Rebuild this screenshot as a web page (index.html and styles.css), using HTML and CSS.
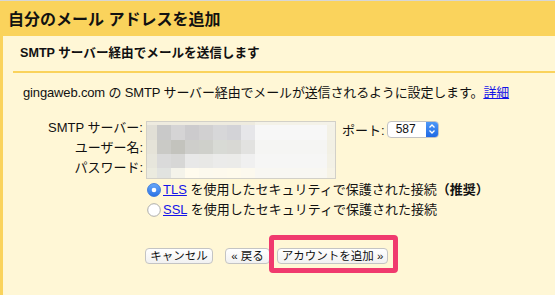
FILE: index.html
```html
<html>

<head>
  <title>自分のメール アドレスを追加</title>
  <link rel="stylesheet" href="styles.css">
</head>

<body>
  <div class="topline"></div>
  <div class="header">
    <h1 class="title">自分のメール アドレスを追加</h1>
  </div>
  <div class="panel">
    <h2 class="subhead">SMTP サーバー経由でメールを送信します</h2>
    <div class="rule"></div>
    <p class="intro">gingaweb.com の SMTP サーバー経由でメールが送信されるように設定します。<a href="#" class="link">詳細</a></p>

    <div class="form">
      <div class="label">SMTP サーバー:</div>
      <div class="mosaic">
        <svg width="190" height="58" viewBox="0 0 190 58">
          <!-- top strip -->
          <rect x="0" y="0" width="109" height="4" fill="#eeebdf" />
          <rect x="109" y="0" width="81" height="4" fill="#f4f2e8" />
          <!-- row 1 -->
          <rect x="0" y="4" width="11" height="15" fill="#e1dfd6" />
          <rect x="11" y="4" width="14" height="15" fill="#c9c9c9" />
          <rect x="25" y="4" width="14" height="15" fill="#d5d4d5" />
          <rect x="39" y="4" width="14" height="15" fill="#cccbcd" />
          <rect x="53" y="4" width="14" height="15" fill="#d1d0d1" />
          <rect x="67" y="4" width="14" height="15" fill="#d7d7d9" />
          <rect x="81" y="4" width="14" height="15" fill="#d3d3d7" />
          <rect x="95" y="4" width="14" height="15" fill="#e6e6e9" />
          <rect x="109" y="4" width="72" height="15" fill="#f7f7f7" />
          <rect x="181" y="4" width="9" height="15" fill="#f3f1e6" />
          <!-- row 2 -->
          <rect x="0" y="19" width="11" height="14" fill="#e5e3d8" />
          <rect x="11" y="19" width="14" height="14" fill="#cacac6" />
          <rect x="25" y="19" width="14" height="14" fill="#c3c3bd" />
          <rect x="39" y="19" width="14" height="14" fill="#cececb" />
          <rect x="53" y="19" width="14" height="14" fill="#cfd0cb" />
          <rect x="67" y="19" width="14" height="14" fill="#d8dad5" />
          <rect x="81" y="19" width="14" height="14" fill="#d8d8d4" />
          <rect x="95" y="19" width="14" height="14" fill="#e2e2e0" />
          <rect x="109" y="19" width="72" height="14" fill="#f5f5f3" />
          <rect x="181" y="19" width="9" height="14" fill="#f2f0e4" />
          <!-- row 3 -->
          <rect x="0" y="33" width="11" height="14" fill="#e7e6dc" />
          <rect x="11" y="33" width="14" height="14" fill="#dadada" />
          <rect x="25" y="33" width="14" height="14" fill="#d7d7d6" />
          <rect x="39" y="33" width="14" height="14" fill="#e8e8e8" />
          <rect x="53" y="33" width="14" height="14" fill="#e8e8e6" />
          <rect x="67" y="33" width="14" height="14" fill="#ebebea" />
          <rect x="81" y="33" width="14" height="14" fill="#ebebe9" />
          <rect x="95" y="33" width="14" height="14" fill="#f0f0f0" />
          <rect x="109" y="33" width="72" height="14" fill="#f6f6f5" />
          <rect x="181" y="33" width="9" height="14" fill="#f3f1e6" />
          <!-- row 4 -->
          <rect x="0" y="47" width="11" height="11" fill="#ebebdf" />
          <rect x="11" y="47" width="14" height="11" fill="#e1e3e0" />
          <rect x="25" y="47" width="14" height="11" fill="#f4f3ea" />
          <rect x="39" y="47" width="14" height="11" fill="#fffbee" />
          <rect x="53" y="47" width="14" height="11" fill="#fcf9ee" />
          <rect x="67" y="47" width="14" height="11" fill="#fdf9ed" />
          <rect x="81" y="47" width="14" height="11" fill="#fefaec" />
          <rect x="95" y="47" width="14" height="11" fill="#fcf9ee" />
          <rect x="109" y="47" width="72" height="11" fill="#f8f7f2" />
          <rect x="181" y="47" width="9" height="11" fill="#f6f3e6" />
          <rect x="0.5" y="0.5" width="189" height="57" fill="none" stroke="#d2d0c8" />
        </svg>
      </div>
      <div class="port">
        <span>ポート:</span>
        <span class="select">
          <span class="select-value">587</span>
          <span class="stepper">
            <svg width="12" height="16" viewBox="0 0 12 16">
              <path d="M3.5 6.5 L6 4 L8.5 6.5 M3.5 9.5 L6 12 L8.5 9.5" fill="none" stroke="#fff" stroke-width="1.3" />
            </svg>
          </span>
        </span>
      </div>
      <div class="label">ユーザー名:</div>
      <div class="label">パスワード:</div>
    </div>

    <div class="radios">
      <div class="radio-row">
        <svg class="radio" width="14" height="14" viewBox="0 0 14 14">
          <defs>
            <linearGradient id="on" x1="0" y1="0" x2="0" y2="1">
              <stop offset="0" stop-color="#6aaaf8" />
              <stop offset="1" stop-color="#2a72e6" />
            </linearGradient>
          </defs>
          <circle cx="7" cy="7" r="6.5" fill="url(#on)" stroke="#2e6fd8" stroke-width="0.8" />
          <circle cx="7" cy="7" r="2.3" fill="#fff" />
        </svg>
        <span><a href="#" class="link">TLS</a> を使用したセキュリティで保護された接続<b>（推奨）</b></span>
      </div>
      <div class="radio-row">
        <svg class="radio" width="14" height="14" viewBox="0 0 14 14">
          <circle cx="7" cy="7" r="6.3" fill="#fff" stroke="#a4a4a4" stroke-width="0.9" />
        </svg>
        <span><a href="#" class="link">SSL</a> を使用したセキュリティで保護された接続</span>
      </div>
    </div>

    <div class="buttons">
      <button type="button" class="btn btn-cancel">キャンセル</button>
      <button type="button" class="btn btn-back">« 戻る</button>
      <button type="button" class="btn btn-add">アカウントを追加 »</button>
    </div>

    <div class="highlight"></div>
  </div>
</body>

</html>
```

FILE: styles.css
```css
body {
  margin: 0;
  font-family: "Liberation Sans", "Noto Sans CJK JP", sans-serif;
  font-size: 13px;
  color: #111;
  background-color: #fff7d6;
}

.topline {
  height: 1px;
  background-color: #d6d6d6;
}

.header {
  height: 35px;
  background-color: #fad35c;
}

.title {
  margin: 0;
  padding: 3px 0 0 8px;
  font-size: 16px;
  line-height: 32px;
  font-weight: bold;
  color: #111;
}

.panel {
  position: relative;
  height: 259px;
  border-left: 3px solid #fad35c;
  background-color: #fff7d6;
}

.subhead {
  margin: 0;
  height: 35px;
  padding-left: 17px;
  font-size: 12.6px;
  line-height: 34px;
  font-weight: bold;
}

.rule {
  margin-left: 10px;
  height: 2px;
  background-color: #fad35c;
}

.intro {
  margin: 10px 0 0 0;
  padding-left: 20px;
  line-height: 20px;
  letter-spacing: -0.15px;
}

.link {
  color: #1515e8;
  text-decoration: underline;
}

.form {
  display: grid;
  grid-template-columns: 140px 190px auto;
  grid-template-rows: 20px 20px 20px;
  column-gap: 3px;
  margin-top: 15px;
}

.label {
  grid-column: 1;
  text-align: right;
  line-height: 20px;
}

.mosaic {
  grid-column: 2;
  grid-row: 1 / span 3;
  margin-top: 3px;
  height: 58px;
}

.mosaic svg {
  display: block;
}

.port {
  grid-column: 3;
  grid-row: 1;
  display: flex;
  align-items: center;
  gap: 2px;
  padding-left: 3px;
  margin-top: 2px;
}

.select {
  display: flex;
  width: 52px;
  height: 17px;
  box-sizing: border-box;
  border: 1px solid #c2c2c2;
  border-radius: 4px;
  background-color: #fff;
  overflow: hidden;
}

.select-value {
  flex: 1;
  padding-left: 8px;
  font-size: 12px;
  line-height: 15px;
}

.stepper {
  width: 12px;
  background: linear-gradient(#4d98f7, #1f69e4);
}

.stepper svg {
  display: block;
  margin-top: -0.5px;
}

.radios {
  margin-top: 2px;
  padding-left: 144px;
}

.radio-row {
  display: flex;
  align-items: center;
  height: 20px;
  line-height: 20px;
}

.radio {
  margin-right: 2px;
}

.radio-row b {
  font-weight: bold;
}

.buttons {
  display: flex;
  margin-top: 28px;
  padding-left: 142px;
}

.btn {
  height: 16px;
  box-sizing: border-box;
  padding: 0;
  border: 1px solid #c4c4c4;
  border-radius: 4px;
  background: linear-gradient(#ffffff, #f1f1f1);
  font-family: "Liberation Sans", "Noto Sans CJK JP", sans-serif;
  font-size: 11.5px;
  line-height: 14px;
  color: #111;
  text-align: center;
}

.btn-cancel {
  width: 68px;
}

.btn-back {
  width: 45px;
  margin-left: 12px;
}

.btn-add {
  width: 111px;
  margin-left: 7px;
}

.highlight {
  position: absolute;
  top: 199px;
  left: 266px;
  width: 129px;
  height: 38px;
  box-sizing: border-box;
  border: 5px solid #f03a6e;
  border-radius: 4px;
}
```
